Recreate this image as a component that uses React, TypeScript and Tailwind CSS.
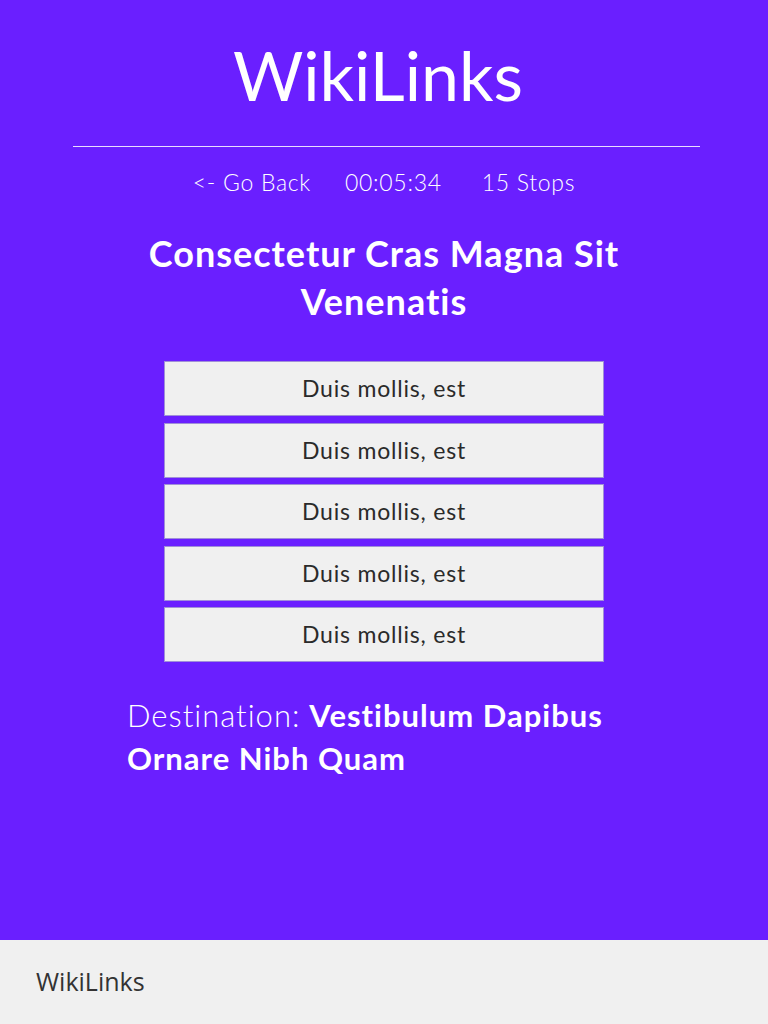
const STOPS = ['Duis mollis, est', 'Duis mollis, est', 'Duis mollis, est', 'Duis mollis, est', 'Duis mollis, est']

export default function App() {
  return (
    <div className="w-[768px] h-[1024px] flex flex-col font-['Lato','Noto_Sans',sans-serif]">
      <main className="h-[940px] bg-[#6a1fff] text-white flex flex-col items-center">
        <h1 className="pt-[40px] mr-[12px] text-[68px] leading-[70px] font-normal">WikiLinks</h1>
        <div className="mt-[36px] h-px w-[627px] ml-[5px] bg-white/85" />
        <nav className="mt-[19px] flex items-center text-[23px] leading-[32px] font-light tracking-[0.7px]">
          <span>&lt;- Go Back</span>
          <span className="ml-[34px]">00:05:34</span>
          <span className="ml-[40px]">15 Stops</span>
        </nav>
        <h2 className="mt-[31px] w-[520px] text-center text-[36px] leading-[48px] font-bold tracking-[1px]">
          Consectetur Cras Magna Sit Venenatis
        </h2>
        <ul className="mt-[36px] w-[440px] flex flex-col gap-[6.5px]">
          {STOPS.map((s, i) => (
            <li
              key={i}
              className="h-[55px] flex items-center justify-center bg-[#f0f0f0] border border-[#a08fd8] text-[23px] tracking-[0.8px] text-[#2a2a2a]"
            >
              {s}
            </li>
          ))}
        </ul>
        <p className="mt-[32px] w-[514px] text-[31px] leading-[43px] tracking-[1px]">
          <span className="font-light">Destination:</span>{' '}
          <span className="font-bold">Vestibulum Dapibus Ornare Nibh Quam</span>
        </p>
      </main>
      <footer className="h-[84px] bg-[#f0f0f0] flex items-center pl-[36px]">
        <span className="font-['Open_Sans',sans-serif] text-[25px] text-[#333333]">WikiLinks</span>
      </footer>
    </div>
  )
}
